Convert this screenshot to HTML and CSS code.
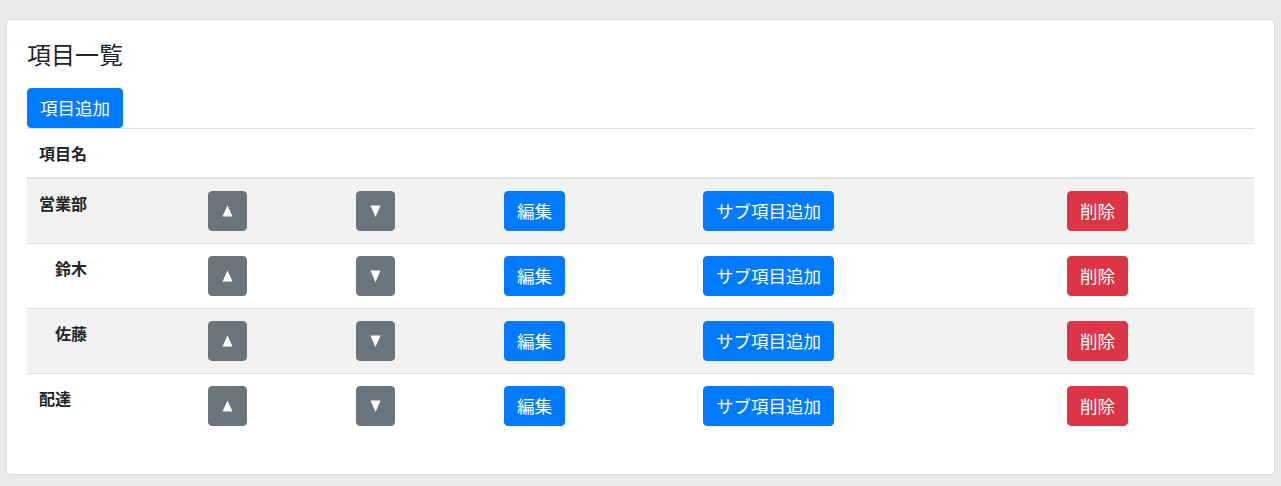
FILE: index.html
```html
<!DOCTYPE html>
<html lang="ja">
<head>
<meta charset="utf-8">
<title>項目一覧</title>
<link rel="stylesheet" href="styles.css">
</head>
<body>
<div class="card">
  <h4 class="title">項目一覧</h4>
  <button class="btn btn-primary">項目追加</button>
  <table class="items">
    <colgroup>
      <col class="c-name"><col class="c-up"><col class="c-down"><col class="c-edit"><col class="c-sub"><col class="c-del">
    </colgroup>
    <thead>
      <tr><th>項目名</th><th></th><th></th><th></th><th></th><th></th></tr>
    </thead>
    <tbody>
      <tr class="odd">
        <th class="name">営業部</th>
        <td><button class="btn btn-secondary btn-arrow"><svg width="13" height="26" viewBox="0 0 13 26"><polygon points="6.5,7.5 11.5,18.5 1.5,18.5" fill="#fff"/></svg></button></td>
        <td><button class="btn btn-secondary btn-arrow"><svg width="13" height="26" viewBox="0 0 13 26"><polygon points="1.5,7.5 11.5,7.5 6.5,19" fill="#fff"/></svg></button></td>
        <td><button class="btn btn-primary">編集</button></td>
        <td><button class="btn btn-primary">サブ項目追加</button></td>
        <td><button class="btn btn-danger">削除</button></td>
      </tr>
      <tr>
        <th class="name child">鈴木</th>
        <td><button class="btn btn-secondary btn-arrow"><svg width="13" height="26" viewBox="0 0 13 26"><polygon points="6.5,7.5 11.5,18.5 1.5,18.5" fill="#fff"/></svg></button></td>
        <td><button class="btn btn-secondary btn-arrow"><svg width="13" height="26" viewBox="0 0 13 26"><polygon points="1.5,7.5 11.5,7.5 6.5,19" fill="#fff"/></svg></button></td>
        <td><button class="btn btn-primary">編集</button></td>
        <td><button class="btn btn-primary">サブ項目追加</button></td>
        <td><button class="btn btn-danger">削除</button></td>
      </tr>
      <tr class="odd">
        <th class="name child">佐藤</th>
        <td><button class="btn btn-secondary btn-arrow"><svg width="13" height="26" viewBox="0 0 13 26"><polygon points="6.5,7.5 11.5,18.5 1.5,18.5" fill="#fff"/></svg></button></td>
        <td><button class="btn btn-secondary btn-arrow"><svg width="13" height="26" viewBox="0 0 13 26"><polygon points="1.5,7.5 11.5,7.5 6.5,19" fill="#fff"/></svg></button></td>
        <td><button class="btn btn-primary">編集</button></td>
        <td><button class="btn btn-primary">サブ項目追加</button></td>
        <td><button class="btn btn-danger">削除</button></td>
      </tr>
      <tr>
        <th class="name">配達</th>
        <td><button class="btn btn-secondary btn-arrow"><svg width="13" height="26" viewBox="0 0 13 26"><polygon points="6.5,7.5 11.5,18.5 1.5,18.5" fill="#fff"/></svg></button></td>
        <td><button class="btn btn-secondary btn-arrow"><svg width="13" height="26" viewBox="0 0 13 26"><polygon points="1.5,7.5 11.5,7.5 6.5,19" fill="#fff"/></svg></button></td>
        <td><button class="btn btn-primary">編集</button></td>
        <td><button class="btn btn-primary">サブ項目追加</button></td>
        <td><button class="btn btn-danger">削除</button></td>
      </tr>
    </tbody>
  </table>
</div>
</body>
</html>
```

FILE: styles.css
```css
* { box-sizing: border-box; }
html, body { margin: 0; padding: 0; }
body {
  background: #e9e9e9;
  font-family: "Noto Sans CJK JP", "Noto Sans", sans-serif;
  font-size: 16px;
  line-height: 1.5;
  color: #212529;
  padding: 19px 6px 12px 6px;
}
.card {
  background: #fff;
  border: 1px solid #dcdcdc;
  border-radius: 4px;
  padding: 20px 20px 20px 20px;
}
.title {
  margin: 0 0 19px 0;
  font-size: 24px;
  font-weight: 400;
  line-height: 28.8px;
}
.btn {
  display: inline-block;
  font-family: inherit;
  font-size: 17.5px;
  line-height: 26px;
  height: 40px;
  padding: 6px 12px;
  border: 1px solid transparent;
  border-radius: 4px;
  color: #fff;
  cursor: pointer;
  vertical-align: top;
  margin: 0;
}
.btn-primary { background: #007bff; border-color: #007bff; }
.btn-secondary { background: #6c757d; border-color: #6c757d; }
.btn-danger { background: #dc3545; border-color: #dc3545; }
.btn-arrow { width: 39px; padding: 6px 12px; }
.btn-arrow svg { display: block; }
.items {
  width: 100%;
  border-collapse: collapse;
  table-layout: fixed;
  margin-bottom: 16px;
}
.c-name { width: 169px; }
.c-up { width: 148px; }
.c-down { width: 148px; }
.c-edit { width: 199px; }
.c-sub { width: 364px; }
.c-del { width: 199px; }
.items th, .items td {
  padding: 12px;
  border-top: 1px solid #dee2e6;
  vertical-align: top;
  text-align: left;
}
.items thead th {
  vertical-align: bottom;
  border-bottom: 2px solid #dee2e6;
  font-weight: 700;
}
.items .name { font-weight: 700; }
.items .child { padding-left: 28px; }
.items tr.odd { background: #f2f2f2; }
```
